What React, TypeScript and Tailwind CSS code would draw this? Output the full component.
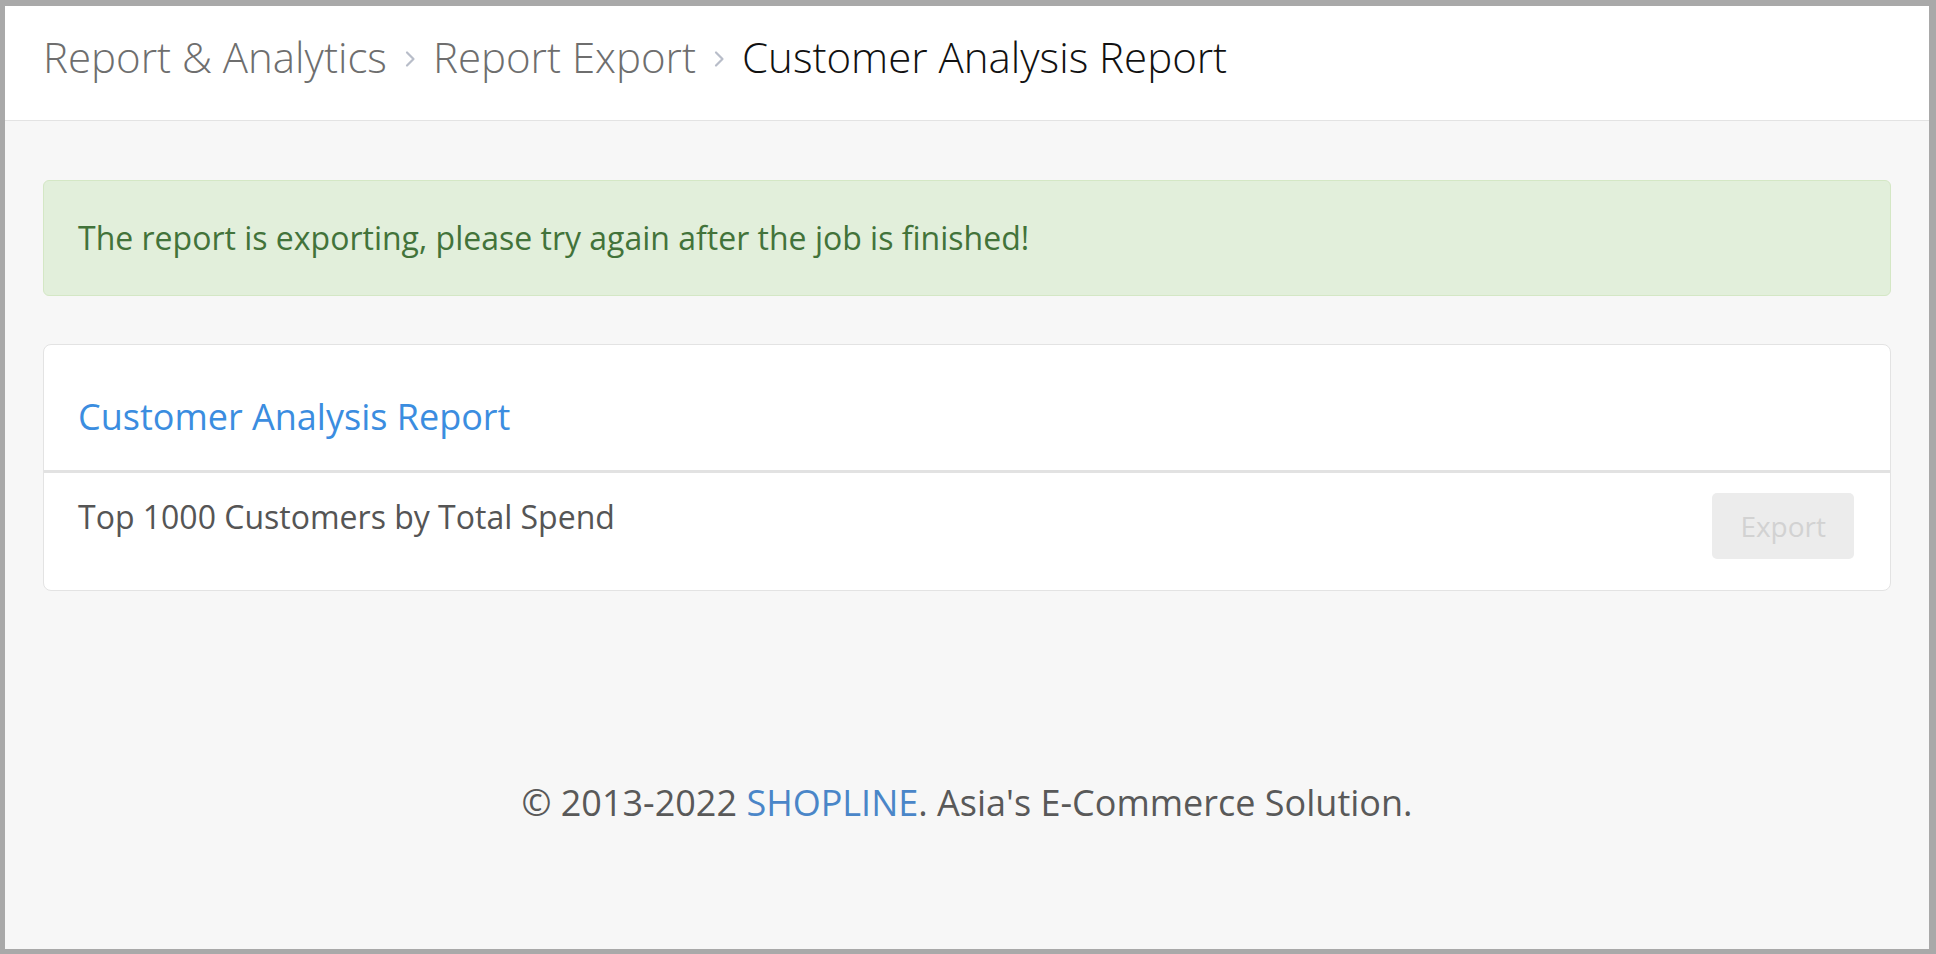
import React from "react";

function Chevron() {
  return (
    <svg width="14" height="24" viewBox="0 0 14 24" className="shrink-0 mx-[16px] mt-[4px]">
      <path d="M4 5.5 L10.5 12 L4 18.5" fill="none" stroke="#b8bdc9" strokeWidth="2.2" strokeLinecap="round" strokeLinejoin="round" />
    </svg>
  );
}

export default function App() {
  return (
    <div
      className="w-full h-[954px] bg-[#a9a9a9] pt-[6px] pl-[5px] pr-[7px] pb-[5px]"
      style={{ fontFamily: '"Open Sans", "Noto Sans", sans-serif' }}
    >
      <div className="h-full flex flex-col bg-[#f7f7f7]">
        <header className="h-[115px] shrink-0 bg-white border-b border-[#e3e3e3] flex items-center pl-[38px] pb-[12px]">
          <div className="flex items-center text-[42px] font-light leading-[50px]">
            <span className="text-[#6e6e6e]">Report &amp; Analytics</span>
            <Chevron />
            <span className="text-[#6e6e6e]">Report Export</span>
            <Chevron />
            <span className="text-[#111111]">Customer Analysis Report</span>
          </div>
        </header>

        <main className="px-[38px] pt-[59px] flex flex-col">
          <div className="h-[116px] rounded-[6px] border border-[#d4e7c5] bg-[#e2efdb] flex items-center px-[34px]">
            <p className="text-[32px] leading-[44px] text-[#42733a]">
              The report is exporting, please try again after the job is finished!
            </p>
          </div>

          <section className="mt-[48px] bg-white rounded-[8px] border border-[#e3e3e3]">
            <div className="pt-[48px] pb-[29px] px-[34px]">
              <h2 className="text-[36px] leading-[48px] text-[#3b8de0]">Customer Analysis Report</h2>
            </div>
            <div className="h-[3px] bg-[#e2e2e2]" />
            <div className="flex items-start justify-between pl-[34px] pr-[36px] pt-[20px] pb-[31px]">
              <p className="text-[32px] leading-[44px] text-[#555555] pt-[2px]">Top 1000 Customers by Total Spend</p>
              <button
                disabled
                className="h-[66px] px-[28px] rounded-[5px] bg-[#ececec] text-[28px] leading-[40px] text-[#d2d2d2]"
              >
                Export
              </button>
            </div>
          </section>
        </main>

        <footer className="mt-[188px] flex justify-center">
          <p className="text-[36px] leading-[48px] text-[#595959]">
            © 2013-2022 <span className="text-[#4a86c8]">SHOPLINE</span>. Asia's E-Commerce Solution.
          </p>
        </footer>
      </div>
    </div>
  );
}
